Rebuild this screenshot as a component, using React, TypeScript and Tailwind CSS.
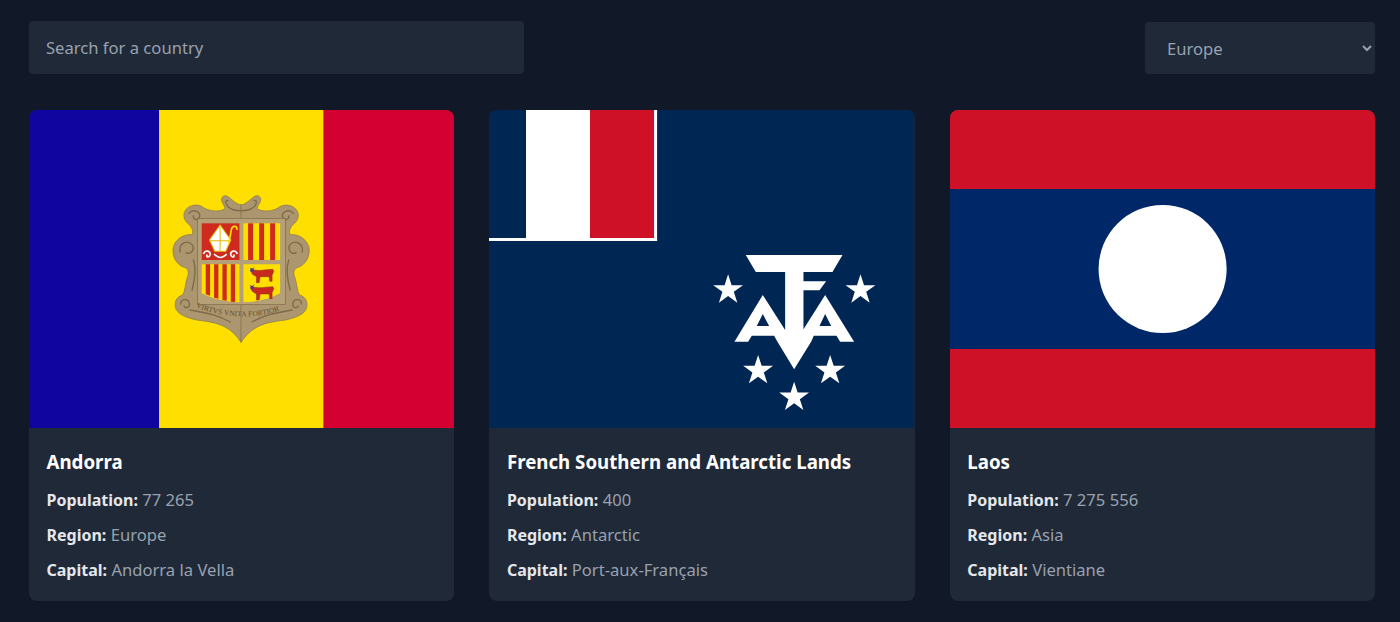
import { type FC } from 'react';

const Star: FC<{ x: number; y: number }> = ({ x, y }) => {
    const points = Array.from({ length: 10 }, (_, i) => {
        const r = i % 2 === 0 ? 47 : 18;
        const a = (Math.PI / 5) * i - Math.PI / 2;
        return `${x + r * Math.cos(a)},${y + r * Math.sin(a)}`;
    }).join(' ');
    return <polygon points={points} fill="#fff" />;
};

const Cow: FC<{ x: number; y: number }> = ({ x, y }) => (
    <g transform={`translate(${x} ${y})`}>
        <path
            d="M14 12 C30 16 54 10 70 10 L73 16 L68 28 L68 46 H61 L59 32 H32 L29 50 H21 L21 32 L8 24 L6 14 Z"
            fill="#c8281e"
            stroke="#7c3a14"
            strokeWidth="1.5"
        />
        <circle cx="8" cy="13" r="6" fill="#5b3a8c" />
        <path d="M2 6 L8 10 L14 4" fill="none" stroke="#3d2a66" strokeWidth="2" />
    </g>
);

const AndorraFlag: FC = () => {
    const half =
        'M243 74 C230 74 218 60 204 50 C192 42 180 52 186 66 C190 76 198 82 192 88 C176 96 150 94 132 84 C118 72 96 72 80 86 C66 100 70 122 86 132 C94 142 102 152 96 164 C76 162 50 172 40 200 C34 226 48 254 72 262 C84 266 88 276 82 292 C74 314 76 336 66 346 C50 350 40 368 48 388 C58 406 82 414 110 420 C140 424 172 428 196 442 C216 452 230 468 243 487 Z';
    const mirror = 'translate(486 0) scale(-1 1)';
    const scrolls = (
        <g fill="none" stroke="#7d6a47" strokeWidth="4" strokeLinecap="round">
            <path d="M60 216 C54 190 82 178 96 194 C106 208 92 226 78 218" />
            <path d="M86 100 C100 84 124 96 118 112 C112 124 98 118 100 108" />
            <path d="M62 372 C62 356 84 354 88 370 C90 382 76 388 72 378" />
            <path d="M90 390 C130 398 170 402 210 426" />
            <path d="M204 62 C196 58 194 70 204 80 C216 92 230 92 243 92" />
            <path d="M100 240 C108 262 104 300 96 330" />
        </g>
    );
    return (
        <svg viewBox="0 0 425 318" preserveAspectRatio="none" className="block w-full h-[318px]">
            <rect width="130" height="318" fill="#10069f" />
            <rect x="130" width="164.5" height="318" fill="#fedf00" />
            <rect x="294.5" width="131" height="318" fill="#d50032" />
            <g transform="translate(131 70) scale(0.3333)">
                <path d={half} fill="#ab9670" stroke="#87744f" strokeWidth="2" />
                <path d={half} fill="#ab9670" stroke="#87744f" strokeWidth="2" transform={mirror} />
                {scrolls}
                <g transform={mirror}>{scrolls}</g>
                <rect x="112" y="116" width="264" height="258" fill="#b5a078" stroke="#7d6a47" strokeWidth="2" />
                <rect x="125" y="130" width="113" height="110" fill="#cf2a1e" />
                <rect x="250" y="130" width="110" height="110" fill="#fedf00" />
                {[264, 297, 330].map((x) => (
                    <rect key={x} x={x} y="130" width="15" height="110" fill="#cf2a1e" />
                ))}
                <path d="M125 253 H238 V367 C205 366 165 360 125 340 Z" fill="#fedf00" />
                {[137, 162, 187, 212].map((x, i) => (
                    <path key={x} d={`M${x} 253 H${x + 13} V${[347, 356, 362, 366][i]} L${x} ${[343, 353, 360, 365][i]} Z`} fill="#cf2a1e" />
                ))}
                <path d="M250 253 H360 V340 C325 358 290 366 250 367 Z" fill="#fedf00" />
                <Cow x={268} y={258} />
                <Cow x={268} y={310} />
                <path d="M148 180 L180 135 L212 180 L197 214 H164 Z" fill="#fff" stroke="#e6b800" strokeWidth="3" />
                <path d="M180 140 V212 M150 182 L210 182" stroke="#e6b800" strokeWidth="3" fill="none" />
                <path d="M206 190 L214 148 C218 134 234 138 230 150" fill="none" stroke="#fedf00" strokeWidth="5" />
                <path d="M130 222 C136 208 152 212 150 224 C146 236 136 230 142 224 M162 222 C176 236 186 236 200 222 M232 222 C226 208 210 212 212 224 C216 236 226 230 220 224" fill="none" stroke="#fff" strokeWidth="5" />
                <path id="andorra-motto" d="M108 380 C170 412 310 425 384 378" fill="none" />
                <text fontFamily="'Liberation Serif', serif" fontSize="22" fill="#5f4d2c" letterSpacing="0.5">
                    <textPath href="#andorra-motto">VIRTVS VNITA FORTIOR</textPath>
                </text>
            </g>
        </svg>
    );
};

const TaafFlag: FC = () => (
    <svg viewBox="0 0 425 318" preserveAspectRatio="none" className="block w-full h-[318px]">
        <rect width="425" height="318" fill="#002654" />
        <rect x="37" width="64" height="129" fill="#fff" />
        <rect x="101" width="64" height="129" fill="#ce1126" />
        <rect x="165" width="3" height="131" fill="#fff" />
        <rect y="128" width="168" height="3" fill="#fff" />
        <g transform="translate(211 130) scale(0.3333)">
            <path
                fill="#fff"
                fillRule="evenodd"
                d="M137 45 H427 L397 96 H310 V124 H378 L358 151 H310 V268 L375 165 L462 305 H420 L409 287 H341 L333 305 L282 388 L232 305 L222 287 H155 L144 305 H103 L188 165 L255 270 V96 H167 Z M188 222 L170 258 H207 Z M375 222 L358 258 H393 Z"
            />
            <Star x={84} y={150} />
            <Star x={481} y={150} />
            <Star x={174} y={392} />
            <Star x={390} y={392} />
            <Star x={282} y={472} />
        </g>
    </svg>
);

const LaosFlag: FC = () => (
    <svg viewBox="0 0 425 318" preserveAspectRatio="none" className="block w-full h-[318px]">
        <rect width="425" height="318" fill="#ce1126" />
        <rect y="79" width="425" height="160" fill="#002868" />
        <circle cx="212.5" cy="159" r="64" fill="#fff" />
    </svg>
);

const countries = [
    { name: 'Andorra', population: '77 265', region: 'Europe', capital: 'Andorra la Vella', flag: <AndorraFlag /> },
    { name: 'French Southern and Antarctic Lands', population: '400', region: 'Antarctic', capital: 'Port-aux-Français', flag: <TaafFlag /> },
    { name: 'Laos', population: '7 275 556', region: 'Asia', capital: 'Vientiane', flag: <LaosFlag /> },
];

const Row: FC<{ label: string; value: string }> = ({ label, value }) => (
    <p className="text-[16.6px] leading-[24px] mt-[11.3px] text-gray-400">
        <strong className="text-base font-bold text-gray-200">{label}:</strong> {value}
    </p>
);

export default function App() {
    return (
        <div className="min-h-[622px] bg-[#111827] pl-[29px] pr-[25px] pt-[21px] font-['Noto_Sans',sans-serif]">
            <div className="flex justify-between items-start h-[53px]">
                <input
                    placeholder="Search for a country"
                    className="w-[495px] h-[53px] bg-[#1f2937] rounded px-[17px] text-[16.6px] text-gray-300 placeholder:text-gray-400 outline-none"
                />
                <select
                    defaultValue="Europe"
                    className="w-[230px] h-[52px] mt-px bg-[#1f2937] rounded pl-[18px] pt-px text-[16.6px] text-gray-400 outline-none"
                >
                    <option>Europe</option>
                </select>
            </div>
            <div className="grid grid-cols-3 gap-x-[35.2px] mt-9">
                {countries.map((c) => (
                    <div key={c.name} className="bg-[#1f2937] rounded-lg overflow-hidden h-[491px]">
                        {c.flag}
                        <div className="px-[17.5px] pt-[20.4px]">
                            <h2 className="text-[18.7px] leading-[28px] font-bold text-white">{c.name}</h2>
                            <Row label="Population" value={c.population} />
                            <Row label="Region" value={c.region} />
                            <Row label="Capital" value={c.capital} />
                        </div>
                    </div>
                ))}
            </div>
        </div>
    );
}
